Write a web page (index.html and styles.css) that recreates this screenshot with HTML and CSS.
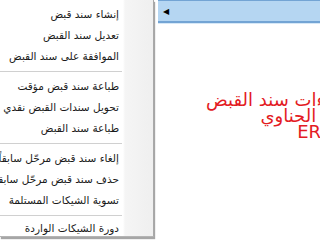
FILE: index.html
```html
<!DOCTYPE html>
<html lang="ar">
<head>
<meta charset="UTF-8">
<meta name="viewport" content="width=device-width, initial-scale=1.0">
<link rel="stylesheet" href="styles.css">
</head>
<body>
    <div class="menu" dir="rtl">
        <div class="menu-item">إنشاء سند قبض</div>
        <div class="menu-item">تعديل سند القبض</div>
        <div class="menu-item">الموافقة على سند القبض</div>
        <div class="menu-sep"></div>
        <div class="menu-item">طباعة سند قبض مؤقت</div>
        <div class="menu-item">تحويل سندات القبض نقدي</div>
        <div class="menu-item">طباعة سند القبض</div>
        <div class="menu-sep"></div>
        <div class="menu-item">إلغاء سند قبض مرحّل سابقاً</div>
        <div class="menu-item">حذف سند قبض مرحّل سابقاً</div>
        <div class="menu-item">تسوية الشيكات المستلمة</div>
        <div class="menu-sep"></div>
        <div class="menu-item">دورة الشيكات الواردة</div>
    </div>

    <div class="main">
        <div class="bar">
            <span class="bar-arrow">&#9664;</span>
        </div>
        <div class="title" dir="rtl">
            <div class="title-first">شاشة إجراءات سند القبض</div>
            <div>برنامج الحناوي</div>
            <div>ERP</div>
        </div>
    </div>
</body>
</html>
```

FILE: styles.css
```css
body {
    margin: 0;
    width: 320px;
    height: 240px;
    overflow: hidden;
    display: flex;
    background-color: #fff;
    font-family: "DejaVu Sans", sans-serif;
}

.menu {
    flex: none;
    width: 154px;
    height: 237px;
    padding-top: 4px;
    box-sizing: border-box;
    background: linear-gradient(to left, #efefef 0, #f5f5f5 28px, #fff 30px);
    border-right: 1px solid #a9a9a9;
    border-bottom: 1px solid #b4b4b4;
    box-shadow: 1px 2px 1px rgba(0, 0, 0, 0.35);
    overflow: hidden;
    white-space: nowrap;
}

.menu-item {
    height: 21px;
    line-height: 21px;
    padding-right: 34px;
    font-size: 10.5px;
    color: #1a1a1a;
}

.menu-item:last-child {
    height: 16px;
    line-height: 17px;
}

.menu-sep {
    height: 1px;
    margin: 4px 31px 4px 0;
    background-color: #d0d0d0;
}

.main {
    flex: none;
    width: 313px;
    margin-left: 4px;
}

.bar {
    height: 20px;
    background-color: #b5d6f2;
    border-top: 1px solid #73a4d4;
    border-bottom: 2px solid #73a4d4;
    box-shadow: 0 1px 0 #d6e8f7;
    display: flex;
    align-items: center;
}

.bar-arrow {
    margin-left: 5px;
    font-size: 8px;
    color: #000;
}

.title {
    margin-top: 69px;
    text-align: center;
    color: #e31b23;
    font-size: 18px;
    line-height: 16px;
    white-space: nowrap;
}

.title-first {
    padding-right: 16px;
}
```
